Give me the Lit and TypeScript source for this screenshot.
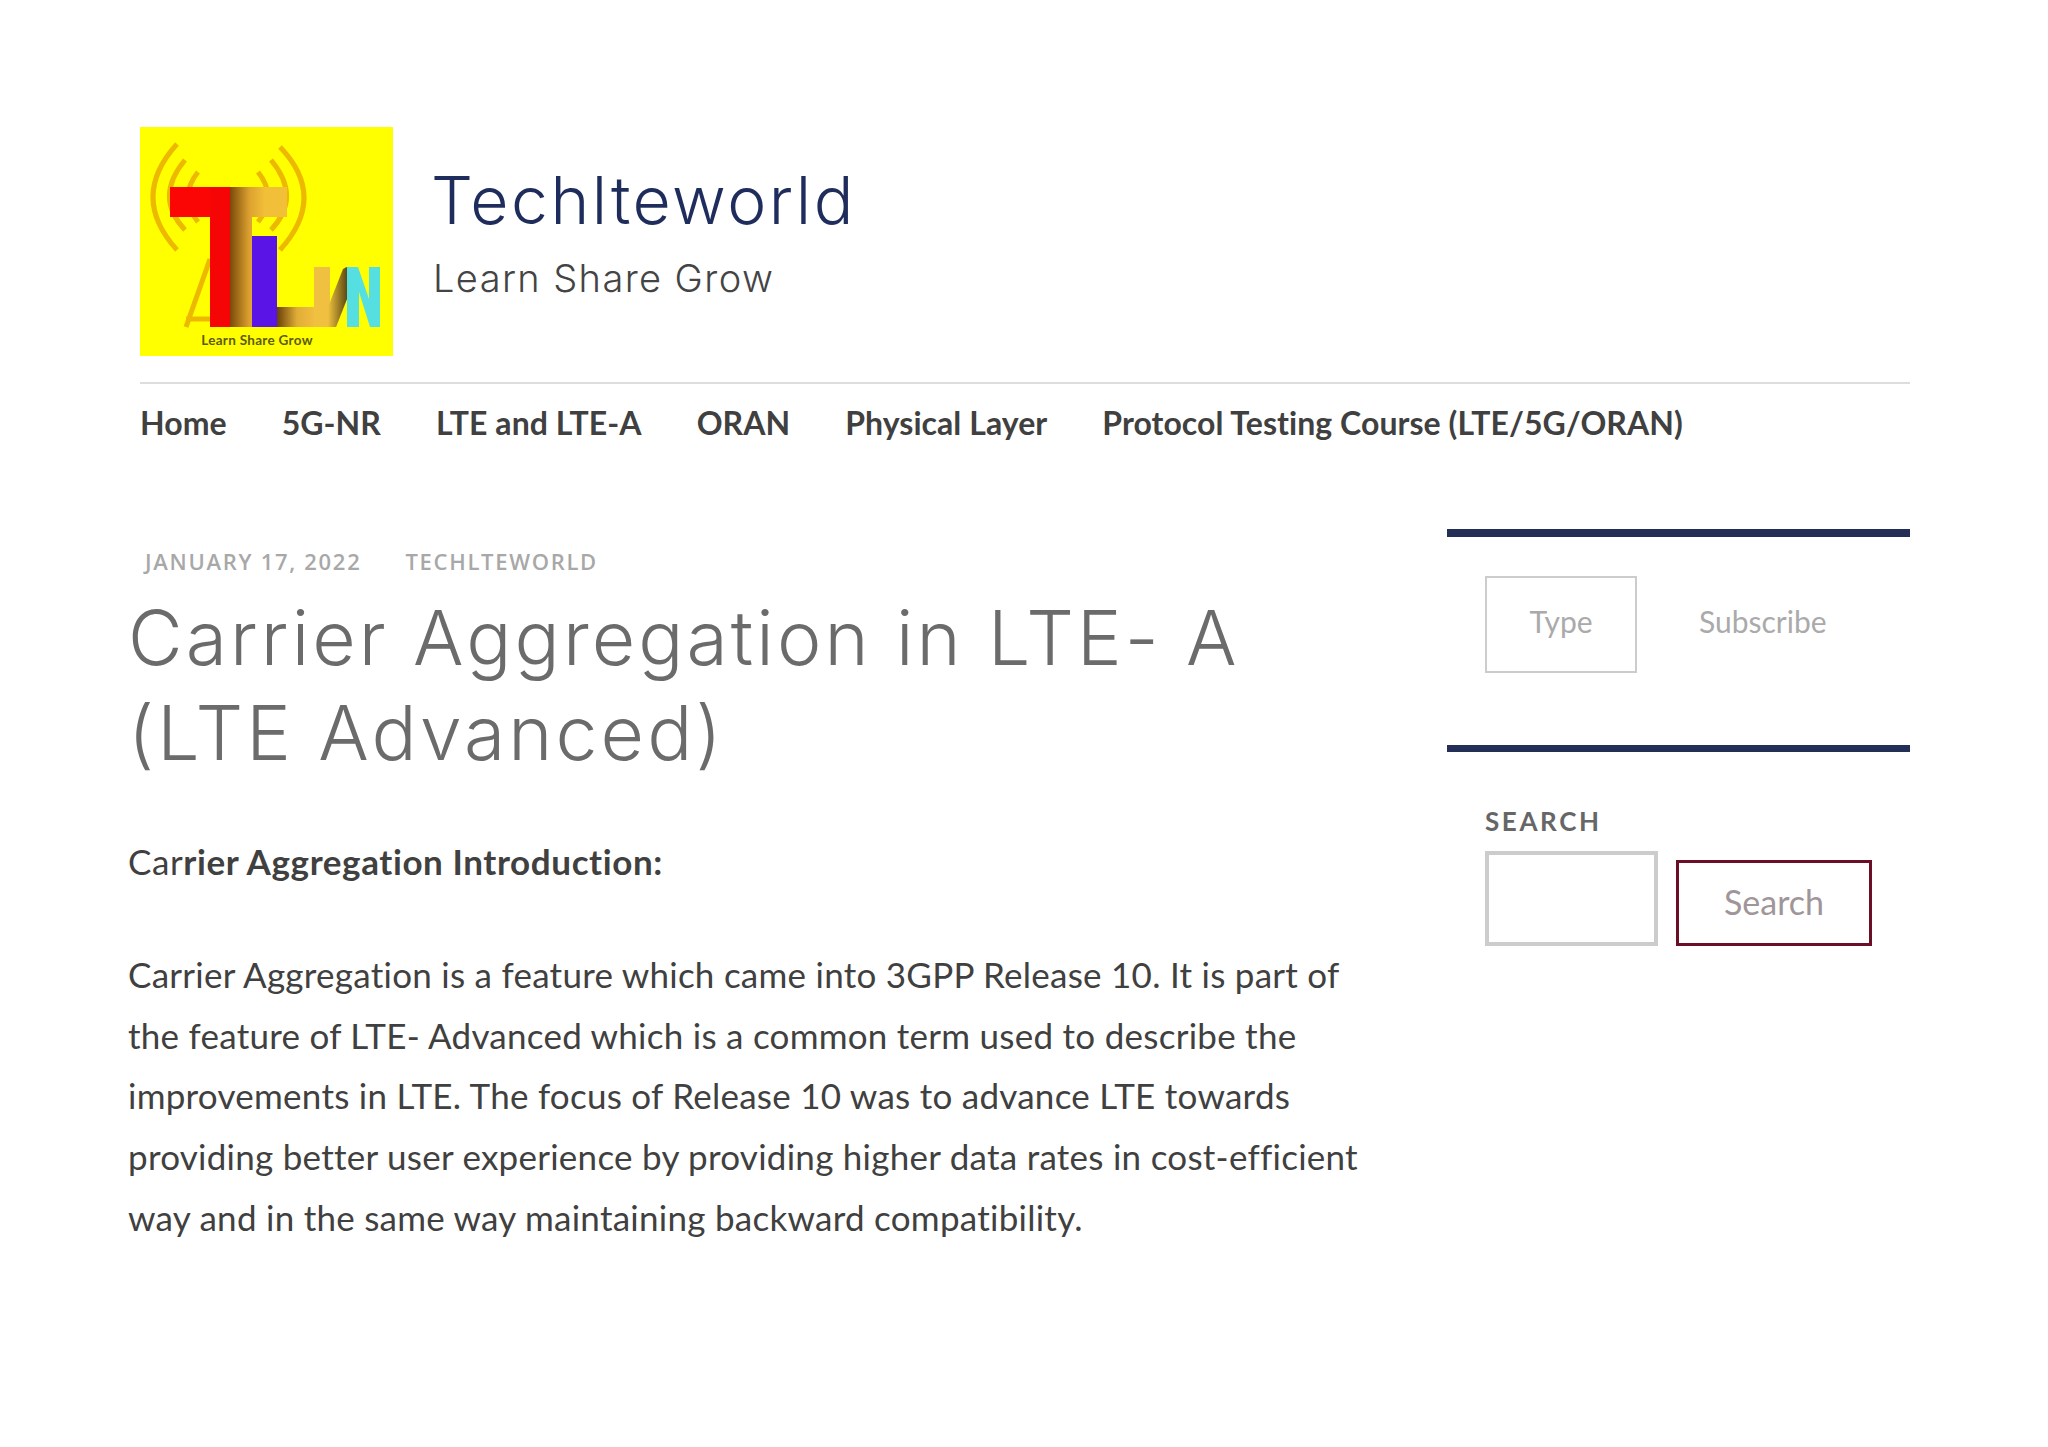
import { LitElement, html, css, svg } from "lit";
import { customElement } from "lit/decorators.js";

const logo = svg`<svg class="logo" viewBox="0 0 253 229" width="253" height="229">
<defs>
<linearGradient id="g1" gradientUnits="userSpaceOnUse" x1="90" x2="125" y1="0" y2="0"><stop offset="0" stop-color="#7a4a08"/><stop offset=".55" stop-color="#dca030"/><stop offset="1" stop-color="#f2c038"/></linearGradient>
<linearGradient id="g2" x1="0" x2="1" y1="0" y2="0"><stop offset="0" stop-color="#6a4208"/><stop offset=".5" stop-color="#e0ad38"/><stop offset="1" stop-color="#f5c040"/></linearGradient>
<linearGradient id="g3" x1="0" x2="1" y1="0" y2="0"><stop offset="0" stop-color="#f0c040"/><stop offset="1" stop-color="#5c4a10"/></linearGradient>
</defs>
<rect width="253" height="229" fill="#ffff00"/>
<g fill="none" stroke="#ecb800" stroke-width="5">
<path d="M37 17Q-11 70 37 123"/><path d="M140 20Q188 70 140 123"/>
<path d="M45 33Q14 70 45 103"/><path d="M131 33Q162 70 131 103"/>
<path d="M58 45Q38 70 58 95"/><path d="M118 45Q138 70 118 95"/>
<path d="M46 200L70 132"/><path d="M46 192L70 192"/><path d="M100 130L115 180"/>
</g>
<rect x="30" y="60" width="60" height="30" fill="#fb0505"/>
<rect x="70" y="60" width="20" height="140" fill="#f50505"/>
<rect x="90" y="60" width="57" height="30" fill="url(#g1)"/>
<rect x="90" y="90" width="22" height="110" fill="url(#g1)"/>
<rect x="112" y="109" width="25" height="91" fill="#5a14e6"/>
<rect x="137" y="180" width="40" height="20" fill="url(#g2)"/>
<path d="M174 140H190V180L205 140H207V172L196 200H174Z" fill="#f0c040"/>
<path d="M196 200L207 172V140L203 142L188 180V200Z" fill="url(#g3)"/>
<path d="M207 140H218L229 172V140H240V200H230L219 165V200H207Z" fill="#55dfe0"/>
<text x="117" y="218" text-anchor="middle" class="lt">Learn Share Grow</text>
</svg>`;

@customElement("app-root")
export class AppRoot extends LitElement {
  static styles = css`
    :host { display: block; width: 2048px; height: 1447px; background: #fff; overflow: hidden; font-family: "Lato", sans-serif; color: #404040; }
    .lt { font: 700 13.5px "Lato", sans-serif; letter-spacing: .3px; fill: #5d5a12; }
    header { display: flex; align-items: flex-start; padding: 127px 138px 0 140px; gap: 38px; }
    .logo { display: block; flex: none; }
    .brand { padding-top: 33px; }
    .site { font: 300 66px/80px "Inter", sans-serif; color: #1f2d5c; letter-spacing: 2.5px; }
    .tag { font: 300 38px/56px "Inter", sans-serif; color: #444; margin-top: 10px; padding-left: 2px; letter-spacing: 1.4px; }
    nav { margin: 26px 138px 0 140px; border-top: 2px solid #ddd; display: flex; gap: 55px; padding-top: 15px; height: 53px; font: 700 32px/48px "Lato", sans-serif; letter-spacing: .06px; color: #404040; }
    .main { display: flex; padding: 77px 138px 0 128px; }
    article { width: 1319px; flex: none; padding-top: 17px; }
    .meta { display: flex; gap: 44px; padding-left: 17px; font: 600 22px/30px "Open Sans", sans-serif; letter-spacing: 1.7px; color: #a8a8a8; }
    h1 { margin: 14px 0 0; font: 300 75px/95px "Inter", sans-serif; color: #6b6b6b; letter-spacing: 3.1px; }
    .intro { margin: 51px 0 0; font: 35px/61px "Lato", sans-serif; letter-spacing: .6px; }
    .intro b { font-weight: 700; }
    .body { margin: 52px 0 0; font: 35px/60.7px "Lato", sans-serif; letter-spacing: .26px; }
    aside { flex: 1; }
    .w1 { border-top: 8px solid #232f57; padding: 39px 38px 0; height: 216px; box-sizing: border-box; display: flex; align-items: flex-start; gap: 62px; }
    .type { width: 152px; height: 97px; padding-bottom: 7px; box-sizing: border-box; border: 2px solid #ccc; display: flex; align-items: center; justify-content: center; font: 30px "Lato", sans-serif; color: #aaa; }
    .sub { height: 90px; display: flex; align-items: center; font: 30px "Lato", sans-serif; color: #aaa; }
    .w2 { border-top: 7px solid #232f57; padding: 53px 38px 0; }
    .lbl { font: 700 26px/32px "Lato", sans-serif; letter-spacing: 2.6px; color: #666; }
    .row { display: flex; align-items: flex-end; gap: 18px; margin-top: 14px; }
    .inp { width: 173px; height: 95px; box-sizing: border-box; border: 4px solid #ccc; }
    .btn { width: 196px; height: 86px; padding-bottom: 3px; box-sizing: border-box; border: 3px solid #6b0f26; display: flex; align-items: center; justify-content: center; font: 34px "Lato", sans-serif; color: #a09599; }
  `;
  render() {
    return html`
      <header>${logo}<div class="brand"><div class="site">Techlteworld</div><div class="tag">Learn Share Grow</div></div></header>
      <nav><span>Home</span><span>5G-NR</span><span>LTE and LTE-A</span><span>ORAN</span><span>Physical Layer</span><span>Protocol Testing Course (LTE/5G/ORAN)</span></nav>
      <div class="main">
        <article>
          <div class="meta"><span>JANUARY 17, 2022</span><span>TECHLTEWORLD</span></div>
          <h1>Carrier Aggregation in LTE- A<br>(LTE Advanced)</h1>
          <p class="intro">Car<b>rier Aggregation Introduction:</b></p>
          <p class="body">Carrier Aggregation is a feature which came into 3GPP Release 10. It is part of<br>the feature of LTE- Advanced which is a common term used to describe the<br>improvements in LTE. The focus of Release 10 was to advance LTE towards<br>providing better user experience by providing higher data rates in cost-efficient<br>way and in the same way maintaining backward compatibility.</p>
        </article>
        <aside>
          <div class="w1"><div class="type">Type</div><div class="sub">Subscribe</div></div>
          <div class="w2"><div class="lbl">SEARCH</div><div class="row"><div class="inp"></div><div class="btn">Search</div></div></div>
        </aside>
      </div>`;
  }
}
